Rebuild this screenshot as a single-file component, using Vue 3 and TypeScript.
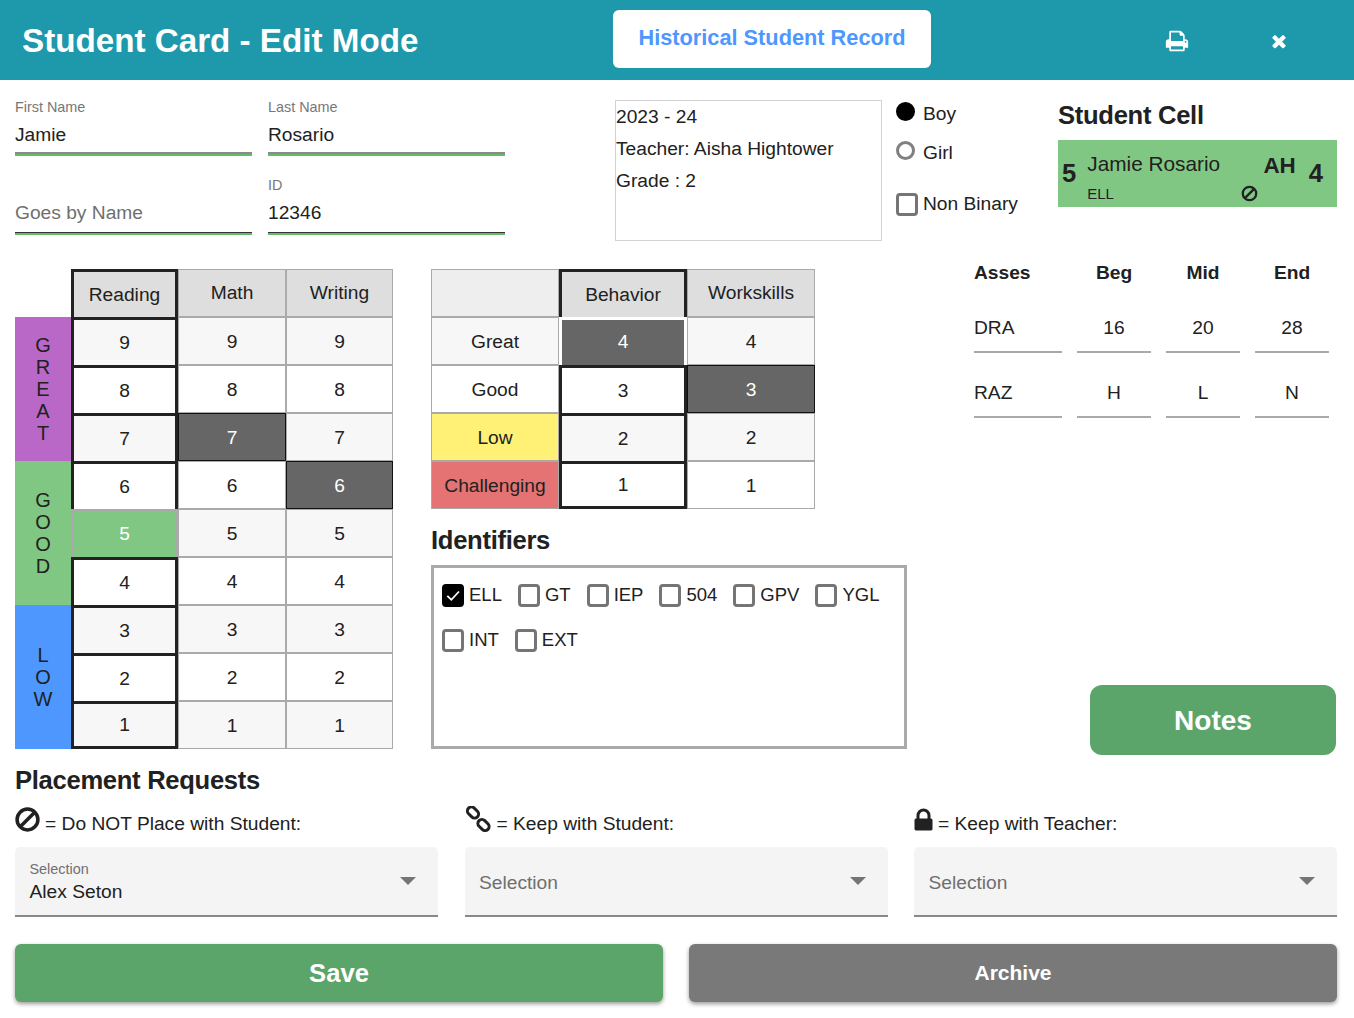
<script setup lang="ts">
type Cell = { text: string | number; cls?: string };

const academicCols = ["Reading", "Math", "Writing"];
const levels = [9, 8, 7, 6, 5, 4, 3, 2, 1];
const bands = [
  { cls: "band-great", letters: "GREAT" },
  { cls: "band-good", letters: "GOOD" },
  { cls: "band-low", letters: "LOW" },
];

const academicCell = (col: string, level: number): string => {
  const zebra = level % 2 === 1 ? "zebra" : "";
  if (col === "Reading") {
    return level === 5 ? "sel" : `thick ${zebra} ${level === 1 ? "thick-end" : ""}`;
  }
  if ((col === "Math" && level === 7) || (col === "Writing" && level === 6)) return "dark";
  return zebra;
};

const behaviorRows: { label: string; cls: string; value: number; behavior: string; work: string }[] = [
  { label: "Great", cls: "zebra", value: 4, behavior: "thick white-frame", work: "zebra" },
  { label: "Good", cls: "", value: 3, behavior: "thick", work: "dark" },
  { label: "Low", cls: "yellow", value: 2, behavior: "thick zebra", work: "zebra" },
  { label: "Challenging", cls: "red", value: 1, behavior: "thick thick-end", work: "" },
];

const identifiers = ["ELL", "GT", "IEP", "504", "GPV", "YGL", "INT", "EXT"];

const assessments: Cell[][] = [
  [{ text: "DRA" }, { text: 16 }, { text: 20 }, { text: 28 }],
  [{ text: "RAZ" }, { text: "H" }, { text: "L" }, { text: "N" }],
];

const printPath =
  "M448 1536h896v-256h-896v256zm0-640h896v-384h-160q-40 0-68-28t-28-68v-160h-640v640zm1152 64q0-26-19-45t-45-19-45 19-19 45 19 45 45 19 45-19 19-45zm128 0v416q0 13-9.500 22.500t-22.500 9.500h-224v160q0 40-28 68t-68 28h-960q-40 0-68-28t-28-68v-160h-224q-13 0-22.500-9.500t-9.500-22.500v-416q0-79 56.500-135.500t135.500-56.500h64v-544q0-40 28-68t68-28h672q40 0 88 20t76 48l152 152q28 28 48 76t20 88v256h64q79 0 135.500 56.500t56.500 135.500z";
const timesPath =
  "M1490 1322q0 40-28 68l-136 136q-28 28-68 28t-68-28l-294-294-294 294q-28 28-68 28t-68-28l-136-136q-28-28-28-68t28-68l294-294-294-294q-28-28-28-68t28-68l136-136q28-28 68-28t68 28l294 294 294-294q28-28 68-28t68 28l136 136q28 28 28 68t-28 68l-294 294 294 294q28 28 28 68z";
const lockPath =
  "M640 768h512v-192q0-106-75-181t-181-75-181 75-75 181v192zm832 96v576q0 40-28 68t-68 28h-960q-40 0-68-28t-28-68v-576q0-40 28-68t68-28h32v-192q0-184 132-316t316-132 316 132 132 316v192h32q40 0 68 28t28 68z";
</script>

<template>
  <div class="page">
    <header class="topbar">
      <h1 class="title">Student Card - Edit Mode</h1>
      <button class="history-btn">Historical Student Record</button>
      <svg class="print-icon" viewBox="0 0 1792 1792"><path :d="printPath" fill="#fff" /></svg>
      <svg class="close-icon" viewBox="0 0 1792 1792"><path :d="timesPath" fill="#fff" /></svg>
    </header>

    <main class="content">
      <section class="top-row">
        <div class="name-grid">
          <div class="field strong">
            <span class="field-label">First Name</span>
            <span class="field-value">Jamie</span>
          </div>
          <div class="field strong">
            <span class="field-label">Last Name</span>
            <span class="field-value">Rosario</span>
          </div>
          <div class="field">
            <span class="field-label"></span>
            <span class="field-value placeholder">Goes by Name</span>
          </div>
          <div class="field">
            <span class="field-label">ID</span>
            <span class="field-value">12346</span>
          </div>
        </div>

        <div class="info-box">
          <div>2023 - 24</div>
          <div>Teacher: Aisha Hightower</div>
          <div>Grade : 2</div>
        </div>

        <div class="gender">
          <div class="gender-row"><span class="radio on"></span>Boy</div>
          <div class="gender-row"><span class="radio"></span>Girl</div>
          <div class="gender-row nb"><span class="check"></span>Non Binary</div>
        </div>

        <div class="cell-wrap">
          <h2 class="heading">Student Cell</h2>
          <div class="student-cell">
            <span class="cell-num">5</span>
            <div class="cell-mid">
              <div class="cell-line">
                <span>Jamie Rosario</span>
                <b class="cell-initials">AH</b>
              </div>
              <div class="cell-line second">
                <span class="cell-tag">ELL</span>
                <svg class="ban small" viewBox="0 0 24 24">
                  <circle cx="12" cy="12" r="9.5" />
                  <line x1="5.500" y1="18.500" x2="18.500" y2="5.500" />
                </svg>
              </div>
            </div>
            <span class="cell-num">4</span>
          </div>
        </div>
      </section>

      <section class="mid-row">
        <div class="academic">
          <div class="corner-blank"></div>
          <div
            v-for="col in academicCols"
            :key="col"
            class="tcell head"
            :class="{ thick: col === 'Reading' }"
          >
            {{ col }}
          </div>
          <div class="bands">
            <div v-for="b in bands" :key="b.letters" class="band" :class="b.cls">
              <span v-for="(l, i) in b.letters" :key="i">{{ l }}</span>
            </div>
          </div>
          <template v-for="level in levels" :key="level">
            <div v-for="col in academicCols" :key="col" class="tcell" :class="academicCell(col, level)">
              {{ level }}
            </div>
          </template>
        </div>

        <div class="middle">
          <div class="behavior">
            <div class="tcell corner"></div>
            <div class="tcell head thick">Behavior</div>
            <div class="tcell head">Workskills</div>
            <template v-for="row in behaviorRows" :key="row.label">
              <div class="tcell" :class="row.cls">{{ row.label }}</div>
              <div class="tcell" :class="row.behavior">{{ row.value }}</div>
              <div class="tcell" :class="row.work">{{ row.value }}</div>
            </template>
          </div>
          <h2 class="heading id-heading">Identifiers</h2>
          <div class="id-box">
            <div v-for="id in identifiers" :key="id" class="id-item">
              <span class="check" :class="{ checked: id === 'ELL' }">
                <svg v-if="id === 'ELL'" viewBox="0 0 24 24">
                  <path d="M3.500 12.500l6 6L21 6" fill="none" stroke="#fff" stroke-width="2.600" />
                </svg>
              </span>
              {{ id }}
            </div>
          </div>
        </div>

        <div class="right">
          <div class="assess">
            <div class="assess-head left">Asses</div>
            <div class="assess-head">Beg</div>
            <div class="assess-head">Mid</div>
            <div class="assess-head">End</div>
            <template v-for="(row, r) in assessments" :key="r">
              <div
                v-for="(c, i) in row"
                :key="i"
                class="assess-cell"
                :class="{ left: i === 0 }"
              >
                {{ c.text }}
              </div>
            </template>
          </div>
          <button class="notes-btn">Notes</button>
        </div>
      </section>

      <h2 class="heading placement-heading">Placement Requests</h2>
      <section class="placement">
        <div class="request">
          <div class="request-label">
            <svg class="ban big" viewBox="0 0 24 24">
              <circle cx="12" cy="12" r="10" />
              <line x1="5" y1="19" x2="19" y2="5" />
            </svg>
            <span>= Do NOT Place with Student:</span>
          </div>
          <div class="select">
            <div class="select-text">
              <span class="select-small">Selection</span>
              <span class="select-value">Alex Seton</span>
            </div>
            <span class="caret"></span>
          </div>
        </div>
        <div class="request">
          <div class="request-label">
            <svg class="chain" viewBox="0 0 26 26" fill="none" stroke="#212121" stroke-width="3">
              <rect x="1.750" y="2.500" width="12.500" height="8" rx="4" transform="rotate(45 8 6.500)" />
              <rect x="12.250" y="15" width="12.500" height="8" rx="4" transform="rotate(45 18.500 19)" />
            </svg>
            <span>= Keep with Student:</span>
          </div>
          <div class="select">
            <div class="select-text"><span class="placeholder">Selection</span></div>
            <span class="caret"></span>
          </div>
        </div>
        <div class="request">
          <div class="request-label">
            <svg class="lock" viewBox="288 128 1216 1408"><path :d="lockPath" fill="#212121" /></svg>
            <span>= Keep with Teacher:</span>
          </div>
          <div class="select">
            <div class="select-text"><span class="placeholder">Selection</span></div>
            <span class="caret"></span>
          </div>
        </div>
      </section>

      <section class="actions">
        <button class="action save">Save</button>
        <button class="action archive">Archive</button>
      </section>
    </main>
  </div>
</template>

<style>
html,
body {
  margin: 0;
  background: #fff;
}
</style>

<style scoped>
.page {
  width: 1354px;
  height: 1018px;
  overflow: hidden;
  background: #fff;
  color: #212121;
  font-family: "Liberation Sans", Arial, sans-serif;
  font-size: 19.2px;
  line-height: 1.2;
}

.topbar {
  display: flex;
  align-items: center;
  height: 80px;
  padding-left: 22px;
  background: #1e98ab;
  box-sizing: border-box;
}

.title {
  width: 591px;
  margin: 2px 0 0;
  color: #fff;
  font-size: 33.200px;
  font-weight: 700;
}

.history-btn {
  width: 318px;
  height: 58px;
  margin-bottom: 2px;
  padding: 0 0 2px;
  border: 0;
  border-radius: 6px;
  background: #fff;
  color: #4d97ff;
  font-family: inherit;
  font-size: 21.750px;
  font-weight: 700;
}

.print-icon {
  width: 24px;
  height: 24px;
  margin-left: 234px;
  margin-top: 1px;
}

.close-icon {
  width: 20px;
  height: 20px;
  margin-left: 80px;
  margin-top: 1px;
}

.content {
  padding: 19px 15px 0;
}

.top-row {
  display: flex;
  height: 170px;
}

.name-grid {
  display: grid;
  grid-template-columns: 237px 237px;
  grid-auto-rows: 57px;
  column-gap: 16px;
  row-gap: 21px;
  width: 600px;
  flex: none;
}

.field {
  display: flex;
  flex-direction: column;
  border-bottom: 1px solid #333;
  box-shadow: 0 2px 0 #66bb6a;
  height: 55px;
  box-sizing: content-box;
}

.field.strong {
  height: 53px;
  border-bottom: 2px solid #8a8a8a;
}

.field-label {
  height: 16px;
  color: #777;
  font-size: 14.400px;
  line-height: 16px;
}

.field-value {
  margin-top: 8px;
  line-height: 24px;
}

.placeholder {
  color: #6f6f6f;
}

.info-box {
  flex: none;
  box-sizing: border-box;
  width: 267px;
  height: 141px;
  margin-top: 1px;
  border: 1px solid #d2d2d2;
}

.info-box div {
  height: 32px;
  line-height: 32px;
}

.gender {
  flex: none;
  width: 162px;
  margin-left: 14px;
}

.gender-row {
  display: flex;
  align-items: center;
  gap: 8px;
  height: 38px;
  margin-top: -4px;
  margin-bottom: 4px;
}

.gender-row:nth-child(2) {
  margin-top: -3px;
}

.gender-row.nb {
  height: 30px;
  margin-top: 17px;
  gap: 5px;
}

.radio {
  width: 19px;
  height: 19px;
  margin-top: -6px;
  border: 3px solid #808080;
  border-radius: 50%;
  box-sizing: border-box;
}

.gender-row:nth-child(2) .radio {
  margin-top: -5px;
}

.radio.on {
  border-color: #000;
  background: #000;
}

.check {
  flex: none;
  display: block;
  width: 22px;
  height: 23px;
  box-sizing: border-box;
  border: 3px solid #757575;
  border-radius: 4px;
}

.check.checked {
  border-color: #000;
  background: #000;
}

.check svg {
  display: block;
  width: 16px;
  height: 17px;
}

.cell-wrap {
  flex: none;
  width: 279px;
}

.heading {
  margin: 1px 0 0;
  font-size: 25.600px;
  font-weight: 700;
  line-height: 30px;
  letter-spacing: -0.3px;
}

.student-cell {
  display: flex;
  align-items: center;
  height: 67px;
  margin-top: 10px;
  padding: 0 14px 0 4px;
  background: #81c784;
}

.cell-num {
  flex: none;
  font-size: 25.600px;
  font-weight: 700;
}

.cell-mid {
  flex: 1;
  margin: 6px 13px 0 11px;
}

.cell-line {
  display: flex;
  justify-content: space-between;
  align-items: center;
  height: 34px;
  font-size: 20.800px;
}

.cell-line.second {
  height: 24px;
  padding-right: 38px;
}

.cell-initials {
  margin-top: 4px;
  font-size: 22.400px;
}

.cell-tag {
  font-size: 15px;
}

.ban {
  fill: none;
  stroke: #212121;
  stroke-width: 3.200;
}

.ban.small {
  width: 17px;
  height: 17px;
}

.ban.big {
  width: 25px;
  height: 25px;
  margin-bottom: 4px;
  stroke-width: 3.400;
}

.mid-row {
  display: flex;
  height: 486px;
}

.academic {
  display: grid;
  flex: none;
  grid-template-columns: 56px 107px 108px 107px;
  grid-template-rows: repeat(10, 48px);
  width: 378px;
}

.corner-blank {
  background: #fff;
}

.bands {
  grid-column: 1;
  grid-row: 2 / span 9;
  display: grid;
  grid-template-rows: repeat(3, 144px);
}

.band {
  display: flex;
  flex-direction: column;
  align-items: center;
  justify-content: center;
  font-size: 20px;
  line-height: 22px;
  box-sizing: border-box;
}

.band-great {
  background: #ba68c8;
}

.band-good {
  background: #81c784;
}

.band-low {
  background: #4d97ff;
}

.tcell {
  display: flex;
  align-items: center;
  justify-content: center;
  box-sizing: border-box;
  padding-top: 2px;
  border: 1px solid #aaa;
  background: #fff;
}

.tcell.head {
  padding-top: 0;
  background: #dedede;
}

.tcell.corner {
  background: #eee;
}

.tcell.zebra {
  background: #f7f7f7;
}

.tcell.thick {
  padding-top: 0;
  border: solid #222;
  border-width: 3px 3px 0;
}

.tcell.thick-end {
  border-bottom-width: 3px;
}

.tcell.sel {
  padding: 0 0 2px;
  border: solid #aaa;
  border-width: 3px 3px 0;
  background: #81c784;
  color: #fff;
}

.tcell.dark {
  border-color: #111;
  background: #666;
  color: #fff;
}

.tcell.white-frame {
  padding-bottom: 2px;
  border-color: #fff;
  background: #666;
  color: #fff;
}

.tcell.yellow {
  background: #fff176;
}

.tcell.red {
  background: #e57373;
}

.middle {
  flex: none;
  width: 476px;
  margin-left: 38px;
}

.behavior {
  display: grid;
  grid-template-columns: repeat(3, 128px);
  grid-template-rows: repeat(5, 48px);
}

.id-heading {
  margin-top: 16px;
}

.id-box {
  display: flex;
  flex-wrap: wrap;
  align-content: flex-start;
  column-gap: 16px;
  row-gap: 22px;
  box-sizing: border-box;
  height: 184px;
  margin-top: 10px;
  padding: 16px 8px;
  border: 3px solid #aaa;
  font-size: 18.500px;
}

.id-item {
  display: flex;
  align-items: center;
  gap: 5px;
  height: 23px;
}

.right {
  display: flex;
  flex: none;
  flex-direction: column;
  width: 363px;
  margin-left: 67px;
}

.assess {
  display: grid;
  grid-template-columns: 88px 74px 74px 74px;
  grid-template-rows: 27px;
  grid-auto-rows: 65px;
  column-gap: 15px;
  margin-top: -8px;
}

.assess-head {
  font-weight: 700;
  text-align: center;
  line-height: 24px;
}

.assess-cell {
  display: flex;
  align-items: center;
  justify-content: center;
  border-bottom: 2px solid #aaa;
  padding-top: 16px;
  box-sizing: border-box;
  height: 65px;
}

.left {
  text-align: left;
  justify-content: flex-start;
}

.notes-btn {
  align-self: flex-end;
  width: 246px;
  height: 70px;
  margin-top: auto;
  margin-right: 1px;
  padding-top: 2px;
  border: 0;
  border-radius: 12px;
  background: #5ca56a;
  color: #fff;
  font-family: inherit;
  font-size: 28px;
  font-weight: 700;
}

.placement-heading {
  margin-top: 10px;
}

.placement {
  display: grid;
  grid-template-columns: repeat(3, 423px);
  column-gap: 26.500px;
  margin-top: 10px;
}

.request-label {
  display: flex;
  align-items: flex-end;
  gap: 5px;
  height: 31px;
  line-height: 24px;
}

.chain {
  width: 26px;
  height: 26px;
  margin-bottom: 4px;
  margin-right: 1px;
}

.lock {
  width: 19px;
  height: 23px;
  margin-bottom: 5px;
}

.select {
  display: flex;
  align-items: center;
  justify-content: space-between;
  box-sizing: border-box;
  height: 70px;
  margin-top: 11px;
  padding: 0 22px 0 14.500px;
  border-bottom: 2px solid #888;
  border-radius: 5px 5px 0 0;
  background: #f4f4f4;
}

.select-text {
  display: flex;
  flex-direction: column;
}

.select-text .placeholder {
  margin-top: 4px;
}

.select-small {
  color: #6f6f6f;
  font-size: 14.400px;
  line-height: 20px;
}

.select-value {
  margin-top: 1px;
}

.caret {
  width: 0;
  height: 0;
  border-left: 8px solid transparent;
  border-right: 8px solid transparent;
  border-top: 8px solid #757575;
}

.actions {
  display: grid;
  grid-template-columns: 648px 648px;
  column-gap: 26px;
  margin-top: 27px;
}

.action {
  height: 58px;
  border: 0;
  border-radius: 6px;
  color: #fff;
  font-family: inherit;
  font-size: 25.600px;
  font-weight: 700;
  box-shadow: 0 2px 4px rgba(0, 0, 0, 0.4);
}

.save {
  background: #5ca56a;
}

.archive {
  background: #797979;
  font-size: 21px;
}
</style>
